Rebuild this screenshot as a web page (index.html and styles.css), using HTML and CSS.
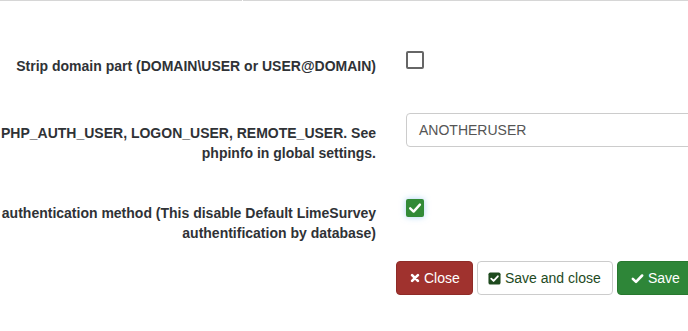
FILE: index.html
```html
<!DOCTYPE html>
<html>
<head>
<meta charset="utf-8">
<link rel="stylesheet" href="styles.css">
</head>
<body>
<div class="topline"><div class="seg seg-a"></div><div class="seg seg-b"></div></div>
<div class="form">
  <div class="row row1">
    <div class="label l1">Strip domain part (DOMAIN\USER or USER@DOMAIN)</div>
    <div class="control"><span class="cb cb-off c1"></span></div>
  </div>
  <div class="row row2">
    <div class="label l2">PHP_AUTH_USER, LOGON_USER, REMOTE_USER. See<br>phpinfo in global settings.</div>
    <div class="control clip"><div class="input">ANOTHERUSER</div></div>
  </div>
  <div class="row row3">
    <div class="label l3">authentication method (This disable Default LimeSurvey<br>authentification by database)</div>
    <div class="control"><span class="cb cb-on c3"><svg viewBox="0 0 18 18" width="18" height="18"><path d="M4.2 9.3 L7.6 12.6 L13.9 5.6" fill="none" stroke="#fff" stroke-width="2.4" stroke-linecap="round" stroke-linejoin="round"/></svg></span></div>
  </div>
  <div class="buttons">
    <button class="btn btn-close"><svg class="ico" viewBox="0 0 12 12" width="10" height="10"><path d="M2.5 2.5 L9.5 9.5 M9.5 2.5 L2.5 9.5" stroke="#fff" stroke-width="3.2" stroke-linecap="round"/></svg>Close</button>
    <button class="btn btn-saveclose"><svg class="ico" viewBox="0 0 14 14" width="13" height="13"><rect x="0.5" y="0.5" width="13" height="13" rx="2" fill="#1e4a1e"/><path d="M3.5 7.2 L6 9.6 L10.6 4.6" fill="none" stroke="#fff" stroke-width="2" stroke-linecap="round" stroke-linejoin="round"/></svg>Save and close</button>
    <button class="btn btn-save"><svg class="ico" viewBox="0 0 14 14" width="13" height="13"><path d="M2 7.4 L5.4 10.6 L12 3.8" fill="none" stroke="#fff" stroke-width="2.8" stroke-linecap="round" stroke-linejoin="round"/></svg>Save</button>
  </div>
</div>
</body>
</html>
```
FILE: styles.css
```css
html, body {
  margin: 0;
  padding: 0;
  background: #fff;
}
body {
  font-family: "Liberation Sans", Arial, sans-serif;
  font-size: 14px;
  color: #333;
  width: 688px;
  height: 331px;
  overflow: hidden;
}
.topline {
  display: flex;
  gap: 1px;
  height: 1px;
}
.seg {
  height: 1px;
  background: #d6d6d6;
}
.seg-a { width: 242px; }
.seg-b { flex: 1; }

.form {
  padding-top: 48px;
}
.row {
  display: grid;
  grid-template-columns: 376px 1fr;
  column-gap: 30px;
  align-items: start;
}
.row2 { margin-top: 37px; }
.row3 { margin-top: 33px; }

.label {
  text-align: right;
  font-weight: bold;
  line-height: 20px;
  white-space: nowrap;
  color: #2f3236;
  padding-top: 7px;
}
.l2 { padding-top: 10px; }

.control { min-width: 0; }
.clip { overflow: hidden; }

.cb {
  display: block;
  box-sizing: border-box;
  width: 18px;
  height: 18px;
  border-radius: 2px;
}
.cb-off {
  border: 2px solid #666;
  background: #fff;
}
.c1 { margin-top: 2px; }
.c3 { margin-top: 3px; }
.cb-on {
  background: #328a37;
  box-shadow: 0 0 6px rgba(102, 175, 233, 0.55);
}
.cb-on svg { display: block; }

.input {
  box-sizing: border-box;
  height: 34px;
  width: calc(100% + 20px);
  border: 1px solid #ccc;
  border-radius: 4px;
  padding: 0 12px;
  line-height: 32px;
  color: #555;
  font-size: 14px;
}

.buttons {
  display: flex;
  gap: 4px;
  padding-left: 396px;
  margin-top: 18px;
  overflow: hidden;
}
.btn {
  box-sizing: border-box;
  height: 34px;
  border-radius: 4px;
  font-family: "Liberation Sans", Arial, sans-serif;
  font-size: 14px;
  padding: 0 10px;
  display: flex;
  align-items: center;
  gap: 4px;
  flex: none;
  white-space: nowrap;
  cursor: pointer;
}
.ico { display: block; flex: none; }
.btn-close {
  width: 77px;
  background: #a0322e;
  border: 1px solid #8f2b27;
  color: #fff;
  padding-left: 13px;
  gap: 4px;
}
.btn-saveclose {
  width: 136px;
  background: #fff;
  border: 1px solid #ccc;
  color: #1e4a1e;
  padding-left: 10px;
  gap: 4px;
}
.btn-save {
  width: 90px;
  background: #2e8638;
  border: 1px solid #28782f;
  color: #fff;
  padding-left: 13px;
  gap: 4px;
}
```
